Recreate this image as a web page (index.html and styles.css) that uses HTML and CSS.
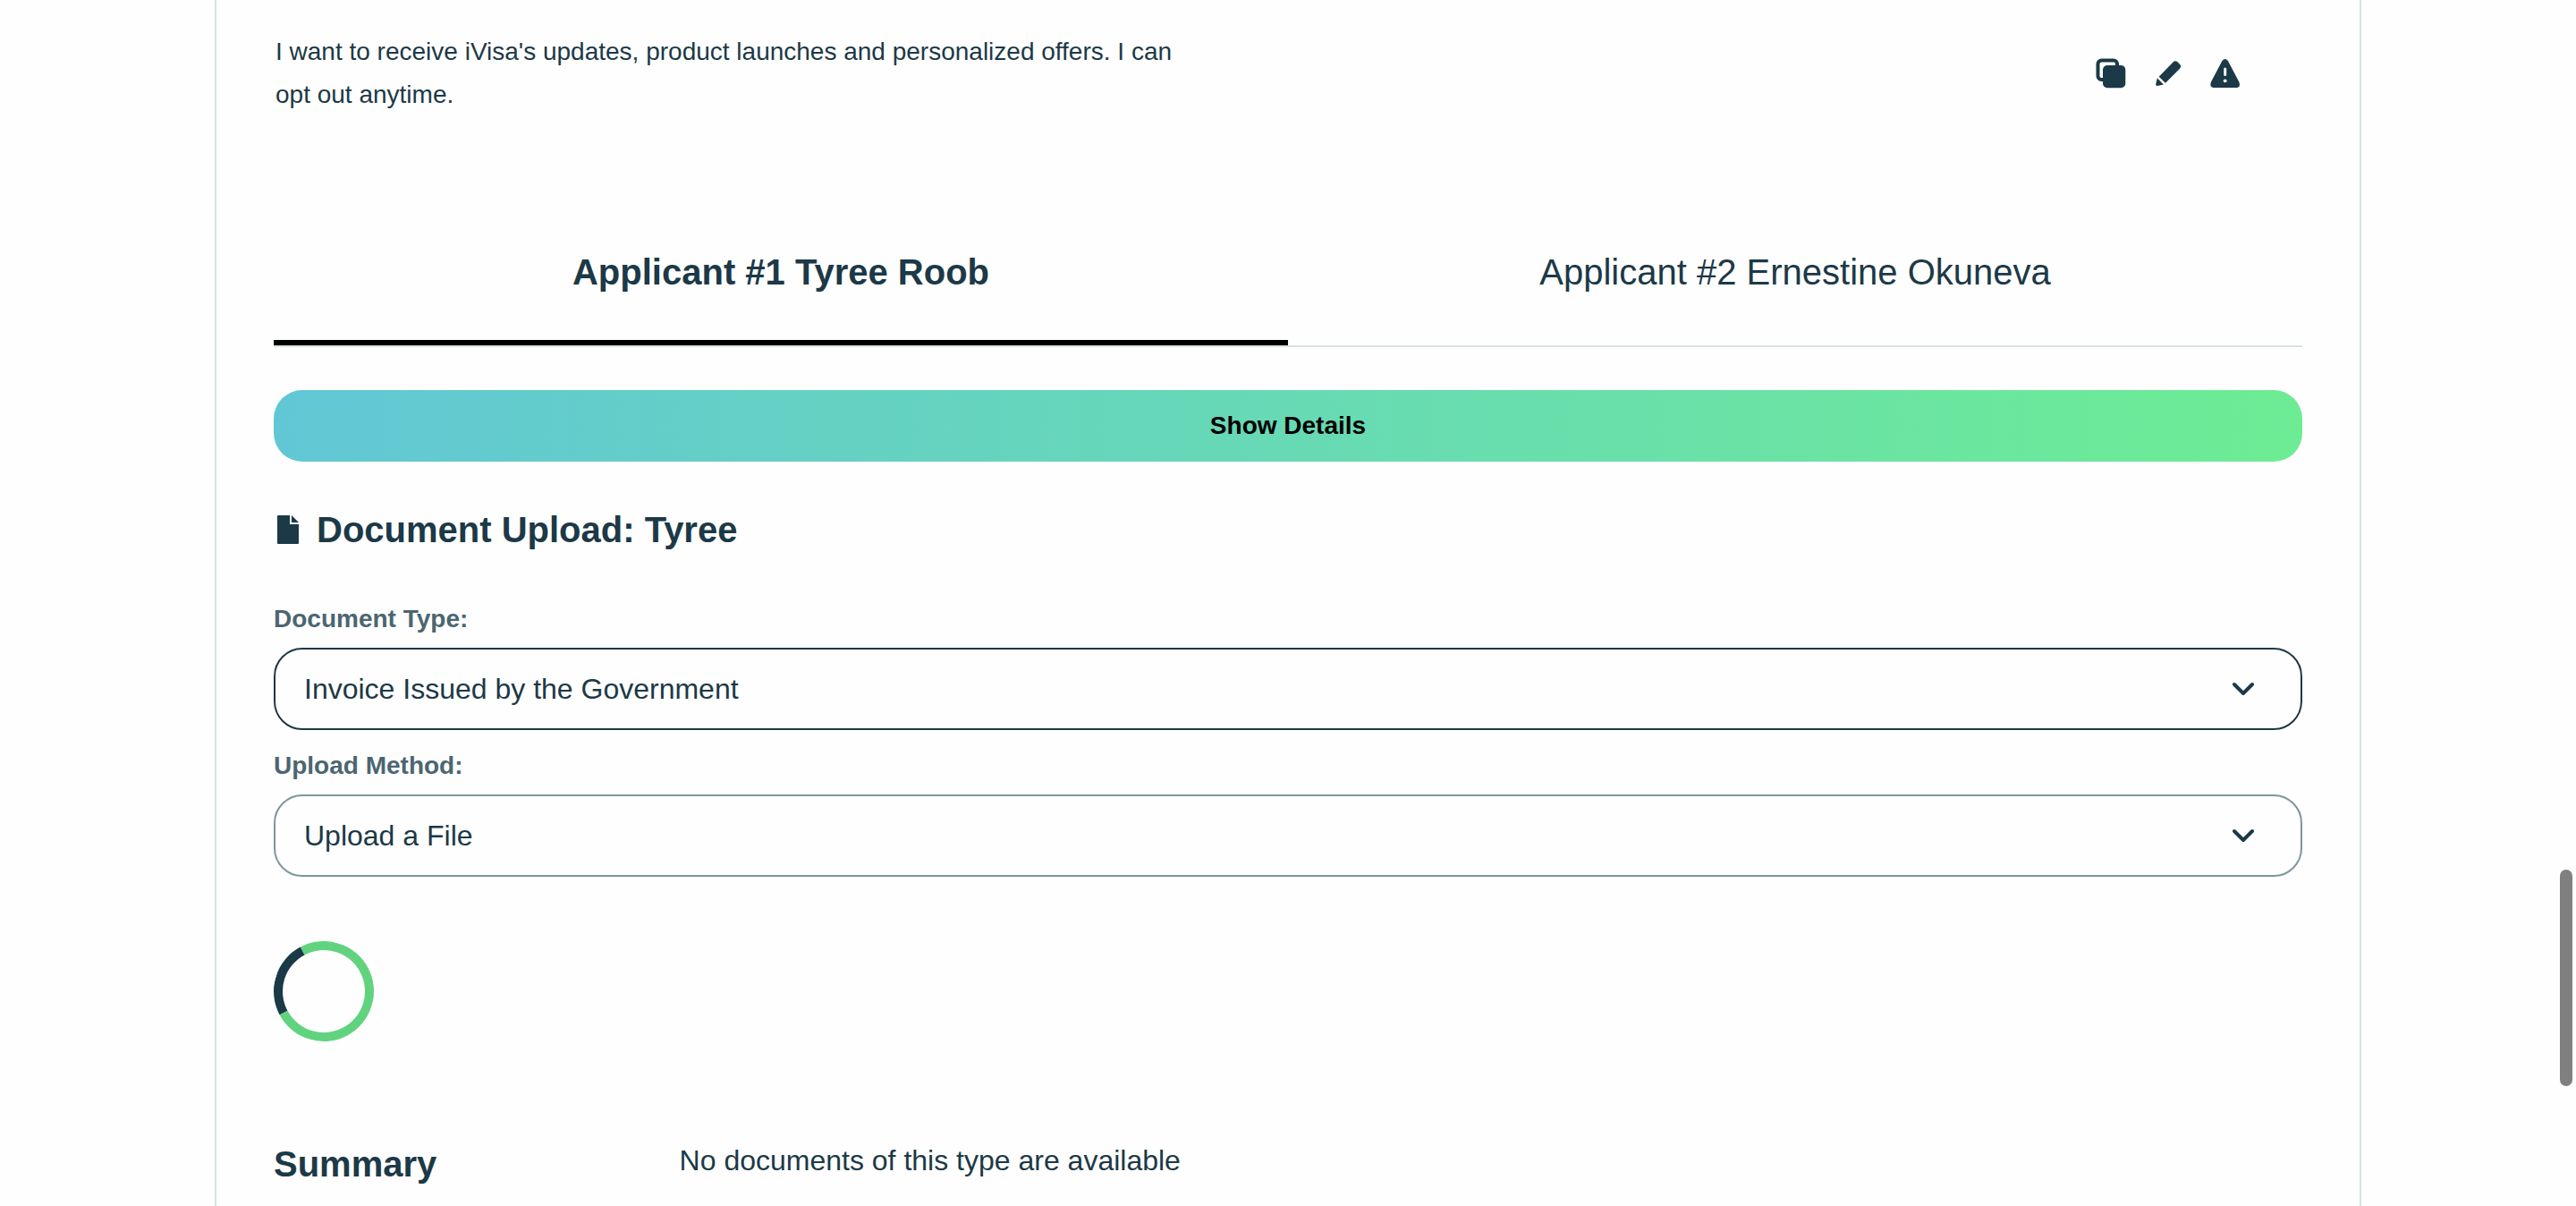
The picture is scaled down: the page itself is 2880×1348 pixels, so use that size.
FILE: index.html
```html
<!DOCTYPE html>
<html lang="en">
<head>
<meta charset="utf-8">
<title>Order details</title>
<link rel="stylesheet" href="styles.css">
</head>
<body>
<main class="panel">
  <section class="consent">
    <p class="consent-text">I want to receive iVisa's updates, product launches and personalized offers. I can opt out anytime.</p>
    <div class="actions">
      <button class="icon-button" type="button" aria-label="Copy">
        <svg class="icon" viewBox="0 0 40 40" aria-hidden="true"><path d="M11 27h-1.500a4 4 0 0 1-4-4V9.500a4 4 0 0 1 4-4H23a4 4 0 0 1 4 4V12" fill="none" stroke="currentColor" stroke-width="4"/><rect x="11" y="11" width="25.300" height="25.300" rx="5" fill="currentColor"/></svg>
      </button>
      <button class="icon-button" type="button" aria-label="Edit">
        <svg class="icon" viewBox="0 0 40 40" aria-hidden="true"><path d="M9.700 23.700 25.500 7.500Q28 5 30.500 7.300L33 9.800Q35.300 12.300 33 14.700L17 30.700ZM7.900 25.300 14.900 32.400 8 33.900Q6 34 6.200 32Z" fill="currentColor"/></svg>
      </button>
      <button class="icon-button" type="button" aria-label="Report a problem">
        <svg class="icon" viewBox="0 0 40 40" aria-hidden="true"><path d="M16.300 6.200Q19.700 1.800 23 6.200L35.400 29.700Q37.500 35.500 32.500 36H7Q1.800 35.500 3.900 29.700Z" fill="currentColor"/><path class="icon-mark" d="M19.700 15v6.500"/><circle class="icon-dot" cx="19.700" cy="28.300" r="1.900"/></svg>
      </button>
    </div>
  </section>

  <div class="tabs" role="tablist">
    <button class="tab tab-active" type="button" role="tab" aria-selected="true">Applicant #1 Tyree Roob</button>
    <button class="tab" type="button" role="tab" aria-selected="false">Applicant #2 Ernestine Okuneva</button>
  </div>

  <button class="details-button" type="button">Show Details</button>

  <h2 class="heading upload-heading">
    <svg class="file-icon" viewBox="0 0 24 32" aria-hidden="true"><path d="M1 0H14V10H24V31Q24 32 23 32H1Q0 32 0 31V1Q0 0 1 0ZM16 0 24 8H16Z" fill="currentColor"/></svg>
    Document Upload: Tyree
  </h2>

  <form class="upload-form">
    <div class="field">
      <label class="field-label" for="document-type">Document Type:</label>
      <div class="select-wrap">
        <select class="select select-focused" id="document-type"><option>Invoice Issued by the Government</option></select>
        <svg class="chevron" viewBox="0 0 24 16" aria-hidden="true"><path d="M2 3 12 13 22 3"/></svg>
      </div>
    </div>
    <div class="field">
      <label class="field-label" for="upload-method">Upload Method:</label>
      <div class="select-wrap">
        <select class="select" id="upload-method"><option>Upload a File</option></select>
        <svg class="chevron" viewBox="0 0 24 16" aria-hidden="true"><path d="M2 3 12 13 22 3"/></svg>
      </div>
    </div>
  </form>

  <div class="spinner" role="status" aria-label="Loading"></div>

  <section class="summary">
    <h2 class="heading">Summary</h2>
    <p class="summary-text">No documents of this type are available</p>
  </section>
</main>
<div class="scroll-thumb"></div>
</body>
</html>
```

FILE: styles.css
```css
* {
  box-sizing: border-box;
}

:root {
  --ink: #1c3947;
  --muted: #4b6671;
  --line: #d6e1e2;
}

body {
  margin: 0;
  background: #fefefe;
  color: var(--ink);
  font-family: "Liberation Sans", Arial, sans-serif;
}

button,
select {
  margin: 0;
  padding: 0;
  border: 0;
  background: none;
  color: inherit;
  font-family: inherit;
}

p,
h2 {
  margin: 0;
}

.panel {
  max-width: 2400px;
  min-height: 100vh;
  margin: 0 auto;
  padding: 34px 64px 16px;
  border: solid var(--line);
  border-width: 0 2px;
}

.consent {
  display: flex;
  justify-content: space-between;
  align-items: center;
  padding: 0 54px 0 2px;
}

.consent-text {
  max-width: 1020px;
  font-size: 28px;
  line-height: 48px;
}

.actions {
  display: flex;
}

.icon-button {
  padding: 12px;
}

.icon {
  display: block;
  width: 40px;
  height: 40px;
}

.icon-mark {
  fill: none;
  stroke: #fefefe;
  stroke-width: 3;
  stroke-linecap: round;
}

.icon-dot {
  fill: #fefefe;
}

.tabs {
  display: flex;
  margin-top: 98px;
  border-bottom: 2px solid var(--line);
}

.tab {
  flex: 1;
  padding: 52px 16px;
  border-bottom: 6px solid transparent;
  font-size: 40px;
  line-height: 48px;
}

.tab-active {
  border-bottom-color: #000;
  font-weight: 700;
}

.details-button {
  display: block;
  width: 100%;
  margin-top: 48px;
  padding: 20px;
  border-radius: 32px;
  background: linear-gradient(90deg, #61c7d5, #6dec94);
  color: #000;
  font-size: 28px;
  font-weight: 700;
  line-height: 40px;
}

.heading {
  font-size: 40px;
  font-weight: 700;
  line-height: 48px;
}

.upload-heading {
  display: flex;
  align-items: center;
  gap: 20px;
  margin-top: 52px;
  padding-left: 4px;
}

.file-icon {
  width: 24px;
  height: 32px;
}

.upload-form {
  display: grid;
  gap: 20px;
  margin-top: 56px;
}

.field {
  display: grid;
  gap: 12px;
}

.field-label {
  color: var(--muted);
  font-size: 28px;
  font-weight: 700;
  line-height: 40px;
}

.select-wrap {
  display: grid;
  align-items: center;
}

.select,
.chevron {
  grid-area: 1 / 1;
}

.select {
  width: 100%;
  padding: 24px 80px 24px 32px;
  border: 2px solid #7f959c;
  border-radius: 32px;
  appearance: none;
  font-size: 32px;
  line-height: 40px;
}

.select-focused {
  border-color: var(--ink);
}

.chevron {
  justify-self: end;
  width: 24px;
  height: 16px;
  margin-right: 54px;
  fill: none;
  stroke: currentColor;
  stroke-width: 4;
  stroke-linecap: round;
  stroke-linejoin: round;
  pointer-events: none;
}

.spinner {
  width: 112px;
  height: 112px;
  margin-top: 72px;
  border: 10px solid #61d37f;
  border-left-color: var(--ink);
  border-radius: 50%;
  transform: rotate(17deg);
}

.summary {
  display: grid;
  grid-template-columns: 1fr 4fr;
  margin-top: 113px;
}

.summary-text {
  font-size: 32px;
  line-height: 40px;
}

.scroll-thumb {
  position: fixed;
  top: 972px;
  right: 4px;
  width: 14px;
  height: 242px;
  border-radius: 7px;
  background: #808080;
}
```
